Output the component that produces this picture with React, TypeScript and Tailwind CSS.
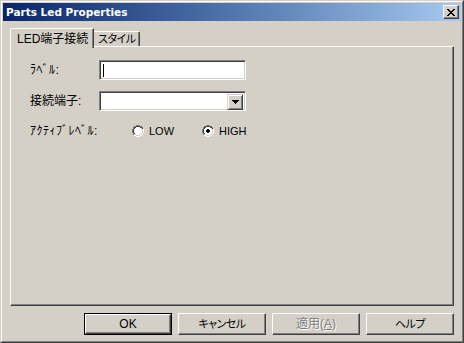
import React from "react";

const raised =
  "border border-t-white border-l-white border-b-[#404040] border-r-[#404040] shadow-[inset_-1px_-1px_0_#808080]";
const sunken =
  "border border-t-[#808080] border-l-[#808080] border-b-white border-r-white shadow-[inset_1px_1px_0_#404040,inset_-1px_-1px_0_#d4d0c8]";

function Radio({ checked }: { checked?: boolean }) {
  return (
    <svg width="12" height="12" viewBox="0 0 12 12" className="shrink-0">
      <path d="M4 0h4v1H4zM2 1h2v1H2zM1 2h1v2H1zM0 4h1v4H0zM1 8h1v2H1z" fill="#808080" />
      <path d="M8 1h2v1H8zM10 2h1v2h-1z" fill="#808080" />
      <path d="M4 1h4v1H4zM2 2h2v1H2zM2 3h1v1H2zM1 4h1v4H1zM2 8h1v1H2z" fill="#404040" />
      <path d="M8 2h2v1H8z" fill="#404040" />
      <path d="M10 3h1v1h-1z" fill="#404040" />
      <path d="M11 4h1v4h-1zM10 8h1v2h-1zM8 10h2v1H8zM4 11h4v1H4zM2 10h2v1H2z" fill="#ffffff" />
      <path d="M10 4h1v4h-1zM9 8h1v1H9zM8 9h1v1H8zM4 10h4v1H4zM3 9h1v1H3z" fill="#d4d0c8" />
      <path d="M4 2h4v1h1v1h1v4H9v1H8v1H4V9H3V8H2V4h1V3h1z" fill="#ffffff" />
      {checked && <path d="M5 4h2v1h1v2H7v1H5V7H4V5h1z" fill="#000" />}
    </svg>
  );
}

const jp = "font-['Liberation_Sans','Noto_Sans_CJK_JP',sans-serif] [font-feature-settings:'palt']";

export default function App() {
  return (
    <div className={`w-[464px] h-[343px] bg-[#d4d0c8] border border-t-[#d4d0c8] border-l-[#d4d0c8] border-b-[#404040] border-r-[#404040] text-black text-[12px] leading-none whitespace-nowrap ${jp}`}>
      <div className="h-full border border-t-white border-l-white border-b-[#808080] border-r-[#808080] p-px flex flex-col">
        {/* Title bar */}
        <div className="h-[18px] flex items-center bg-gradient-to-r from-[#0a246a] to-[#a6caf0] pl-[3px] pr-[2px]">
          <span className="flex-1 text-white font-bold text-[10.5px] font-['DejaVu_Sans',sans-serif]">
            Parts Led Properties
          </span>
          <div className={`w-[16px] h-[14px] bg-[#d4d0c8] flex items-center justify-center ${raised}`}>
            <svg width="8" height="7" viewBox="0 0 8 7">
              <path d="M0 0h2v1h1v1h2V1h1V0h2v1H7v1H6v1H5v1h1v1h1v1h1v1H6V6H5V5H3v1H2v1H0V6h1V5h1V4h1V3H2V2H1V1H0z" fill="#000" />
            </svg>
          </div>
        </div>

        {/* Body */}
        <div className="flex-1 flex flex-col px-[7px] pt-[7px]">
          {/* Tabs */}
          <div className="flex items-end h-[18px] relative z-10">
            <div className="w-[84px] h-[20px] -mb-[2px] bg-[#d4d0c8] border-t border-l border-r border-t-white border-l-white border-r-[#404040] shadow-[inset_-1px_0_0_#808080] rounded-tl-[2px] flex items-start pl-[6px] pt-[4px] text-[12px]">
              LED端子接続
            </div>
            <div className="w-[46px] h-[15px] bg-[#d4d0c8] border-t border-r border-t-white border-r-[#404040] shadow-[inset_-1px_0_0_#808080] rounded-tr-[2px] flex items-start pl-[4px] pt-[2px] text-[11px] tracking-[-0.5px]">
              スタイル
            </div>
          </div>

          {/* Panel */}
          <div className="h-[260px] border border-t-white border-l-white border-b-[#404040] border-r-[#404040] shadow-[inset_-1px_-1px_0_#808080] pl-[19px] pt-[13px] flex flex-col">
            <div className="flex items-center h-[20px]">
              <span className="w-[69px] text-[12px] tracking-[0.5px]">ﾗﾍﾞﾙ:</span>
              <div className={`w-[147px] h-[20px] bg-white ${sunken} flex items-center pl-[3px]`}>
                <div className="w-px h-[13px] bg-black" />
              </div>
            </div>
            <div className="flex items-center h-[20px] mt-[11px]">
              <span className="w-[69px] text-[12px]">接続端子:</span>
              <div className={`w-[147px] h-[20px] bg-white ${sunken} flex justify-end p-[2px]`}>
                <div className="w-[16px] h-[16px] bg-[#d4d0c8] border border-t-[#d4d0c8] border-l-[#d4d0c8] border-b-[#404040] border-r-[#404040] shadow-[inset_1px_1px_0_#fff,inset_-1px_-1px_0_#808080] flex items-center justify-center">
                  <svg width="7" height="4" viewBox="0 0 7 4">
                    <path d="M0 0h7v1H6v1H5v1H4v1H3V3H2V2H1V1H0z" fill="#000" />
                  </svg>
                </div>
              </div>
            </div>
            <div className="flex items-center h-[20px] mt-[10px]">
              <span className="w-[69px] text-[12px] tracking-[0.5px]">ｱｸﾃｨﾌﾞﾚﾍﾞﾙ:</span>
              <div className="ml-[33px] w-[70px] flex items-center gap-[5px]">
                <Radio />
                <span className="text-[11px] font-['Liberation_Sans',sans-serif]">LOW</span>
              </div>
              <div className="flex items-center gap-[5px]">
                <Radio checked />
                <span className="text-[11px] font-['Liberation_Sans',sans-serif]">HIGH</span>
              </div>
            </div>
          </div>

          {/* Buttons */}
          <div className="flex justify-end gap-[6px] mt-[7px]">
            <div className="w-[88px] h-[22px] border border-black">
              <div className={`w-full h-full flex items-center justify-center text-[12px] ${raised}`}>
                OK
              </div>
            </div>
            <div className={`w-[88px] h-[22px] flex items-center justify-center text-[11px] tracking-[-0.5px] ${raised}`}>
              キャンセル
            </div>
            <div className={`w-[88px] h-[22px] flex items-center justify-center text-[12px] text-[#808080] [text-shadow:1px_1px_0_#fff] ${raised}`}>
              適用(<span className="underline">A</span>)
            </div>
            <div className={`w-[88px] h-[22px] flex items-center justify-center text-[11px] tracking-[-0.5px] ${raised}`}>
              ヘルプ
            </div>
          </div>
        </div>
      </div>
    </div>
  );
}
